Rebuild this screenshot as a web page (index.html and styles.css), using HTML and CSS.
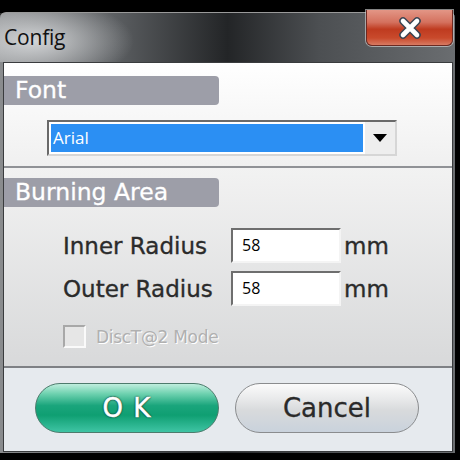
FILE: index.html
```html
<!DOCTYPE html>
<html>
<head>
<meta charset="utf-8">
<link rel="stylesheet" href="styles.css">
</head>
<body>
<div class="window">
  <div class="titlebar">
    <span class="title">Config</span>
    <div class="close"><svg width="34" height="22" viewBox="0 0 34 22"><path d="M10 4 L24 18 M24 4 L10 18" stroke="#3a4452" stroke-width="7.5" stroke-linecap="round"/><path d="M10 4 L24 18 M24 4 L10 18" stroke="#fff" stroke-width="4.6" stroke-linecap="round"/></svg></div>
  </div>
  <div class="client">
    <div class="section sec-font">
      <div class="header">Font</div>
      <div class="select">
        <div class="sel-val">Arial</div>
        <div class="sel-btn"><svg width="14" height="8" viewBox="0 0 14 8"><path d="M0 0 H14 L7 8 Z" fill="#000"/></svg></div>
      </div>
    </div>
    <div class="section sec-area">
      <div class="header">Burning Area</div>
      <div class="rows">
        <div class="row"><span class="label">Inner Radius</span><div class="input">58</div><span class="unit">mm</span></div>
        <div class="row"><span class="label">Outer Radius</span><div class="input">58</div><span class="unit">mm</span></div>
      </div>
      <div class="check"><span class="box"></span><span class="check-label">DiscT@2 Mode</span></div>
    </div>
    <div class="footer">
      <div class="btn ok">O K</div>
      <div class="btn cancel">Cancel</div>
    </div>
  </div>
</div>
</body>
</html>
```
FILE: styles.css
```css
html, body { margin: 0; padding: 0; }
body { background: #000; width: 460px; height: 460px; overflow: hidden; font-family: "DejaVu Sans", sans-serif; }
.window {
  margin-top: 12px;
  width: 455px;
  height: 441px;
  box-sizing: border-box;
  border-radius: 6px 6px 0 0;
  border-top: 1px solid #9a9a9a;
  background: linear-gradient(90deg, #8a8c8e 0%, #5c5f62 25%, #232527 50%, #4c4f52 70%, #6a6d70 100%);
  display: flex;
  flex-direction: column;
  padding: 0 2px 1px 3px;
}
.titlebar {
  height: 49px;
  display: flex;
  justify-content: space-between;
  align-items: flex-start;
  background: radial-gradient(ellipse 100px 42px at 34px 28px, rgba(232,234,236,0.8), rgba(232,234,236,0) 100%);
  margin-left: -3px;
  padding-left: 4px;
}
.title {
  font-family: "Open Sans", sans-serif;
  font-size: 21px;
  color: #111;
  margin-top: 10px;
  letter-spacing: -0.2px;
}
.close {
  margin-top: -3px;
  width: 87px;
  height: 36px;
  box-sizing: border-box;
  border: 1px solid #6b2a22;
  border-top: none;
  border-radius: 0 0 6px 6px;
  background: linear-gradient(180deg, #e39686 0%, #d4715e 35%, #bf3b20 55%, #c94a2c 80%, #d87a62 100%);
  box-shadow: 0 0 0 1px rgba(220,220,220,0.6);
  display: flex;
  align-items: center;
  justify-content: center;
}
.client {
  flex: 1;
  display: flex;
  flex-direction: column;
  border: 1px solid #3a3c3e;
  background: #e6eaee;
}
.section { display: flex; flex-direction: column; border-bottom: 2px solid #909296; }
.sec-font { height: 103px; background: linear-gradient(180deg, #ffffff 0%, #f0f0f0 100%); }
.sec-area { height: 198px; background: linear-gradient(180deg, #f2f2f2 0%, #d8d9da 100%); border-bottom-color: #7e8084; }
.header {
  width: 215px;
  height: 29px;
  box-sizing: border-box;
  background: #9d9ea8;
  border-radius: 0 4px 4px 0;
  color: #fff;
  font-size: 23.5px;
  padding-left: 11px;
  line-height: 29px;
  margin-top: 13px;
  -webkit-text-stroke: 0.3px #fff;
}
.sec-area .header { margin-top: 10px; }
.select {
  margin: 15px 0 0 43px;
  width: 350px;
  height: 36px;
  box-sizing: border-box;
  border: 2px solid #6a6a6a;
  border-right-color: #d6d6d6;
  border-bottom-color: #d6d6d6;
  background: #fff;
  display: flex;
  padding: 2px;
}
.sel-val {
  flex: 1;
  background: #2b8ff3;
  color: #fff;
  font-family: "Open Sans", sans-serif;
  font-size: 17px;
  line-height: 28px;
  padding-left: 2px;
}
.sel-btn {
  width: 30px;
  margin: -2px -2px -2px 0;
  background: #eeeeee;
  border-left: 2px solid #fff;
  display: flex;
  align-items: center;
  justify-content: center;
}
.rows { display: flex; flex-direction: column; gap: 8px; margin: 21px 0 0 59px; }
.row { display: flex; align-items: center; }
.label { width: 168px; font-size: 23px; color: #2b2b2b; -webkit-text-stroke: 0.35px #2b2b2b; }
.input {
  width: 110px;
  height: 35px;
  box-sizing: border-box;
  border: 2px solid #6e6e6e;
  border-right-color: #f4f4f4;
  border-bottom-color: #f4f4f4;
  background: #fff;
  font-family: "Open Sans", sans-serif;
  font-size: 16px;
  color: #000;
  padding-left: 9px;
  line-height: 30px;
}
.unit { font-size: 23px; color: #2b2b2b; margin-left: 3px; -webkit-text-stroke: 0.35px #2b2b2b; }
.check { display: flex; align-items: center; margin: 19px 0 0 59px; }
.box {
  width: 19px;
  height: 19px;
  border: 2px solid #a8a8a8;
  border-right-color: #fafafa;
  border-bottom-color: #fafafa;
  background: #e6e6e6;
}
.check-label { font-size: 17px; color: #b0b0b0; margin-left: 10px; text-shadow: 1px 1px 0 #fff; letter-spacing: -0.3px; }
.footer { flex: 1; display: flex; gap: 16px; padding: 15px 0 0 31px; }
.btn {
  width: 184px;
  height: 50px;
  box-sizing: border-box;
  border-radius: 25px;
  display: flex;
  align-items: center;
  justify-content: center;
  font-size: 26px;
}
.ok {
  border: 1px solid #4d7b6c;
  background: linear-gradient(180deg, #bfeedd 0%, #6fd2b0 20%, #1aa57c 45%, #0f9f72 65%, #3fc4a4 100%);
  color: #fff;
  text-shadow: 0 0 2px #083d2e, 0 0 2px #083d2e, 0 0 1px #083d2e;
  letter-spacing: 1px;
  -webkit-text-stroke: 0.5px #fff;
}
.cancel {
  border: 1px solid #8a8c8e;
  background: linear-gradient(180deg, #fbfbfb 0%, #e9eaeb 30%, #d8dadc 55%, #c9d2dc 100%);
  color: #2a2a2a;
  -webkit-text-stroke: 0.3px #2a2a2a;
}
```
